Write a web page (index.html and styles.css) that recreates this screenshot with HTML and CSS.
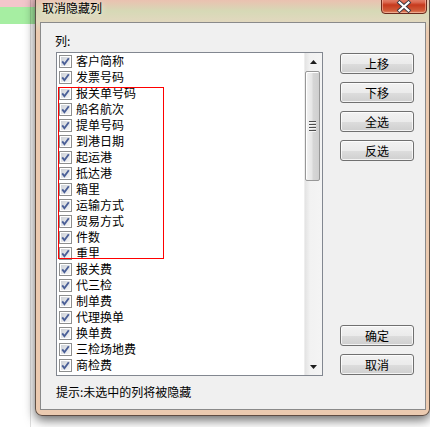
FILE: index.html
```html
<!DOCTYPE html>
<html lang="zh">
<head>
<meta charset="utf-8">
<title>取消隐藏列</title>
<link rel="stylesheet" href="styles.css">
</head>
<body>
<svg class="defs" width="0" height="0" aria-hidden="true">
  <defs>
    <linearGradient id="cbg" x1="0" y1="0" x2="1" y2="1">
      <stop offset="0" stop-color="#cdd1d7"/>
      <stop offset="1" stop-color="#f7f7f7"/>
    </linearGradient>
    <symbol id="chk" viewBox="0 0 13 13">
      <rect x="0.5" y="0.5" width="12" height="12" fill="#ffffff" stroke="#8e8f8f"/>
      <rect x="2" y="2" width="9" height="9" fill="url(#cbg)"/>
      <path d="M3.2 6.4 L5.4 9.2 L9.8 3.2" fill="none" stroke="#4a5f97" stroke-width="1.9" stroke-linejoin="miter"/>
    </symbol>
  </defs>
</svg>
<div class="desktop">
  <div class="appbar">
    <div class="pink"></div>
    <div class="green"></div>
  </div>
  <div class="vline"></div>

  <div class="window">
    <div class="titlebar">
      <span class="title">取消隐藏列</span>
      <div class="close">
        <svg width="46" height="20" viewBox="0 0 46 20">
          <path d="M18.5 8.5 L27.5 16.5 M27.5 8.5 L18.5 16.5" stroke="#3b3b44" stroke-width="4" stroke-linecap="square"/>
          <path d="M18.5 8.5 L27.5 16.5 M27.5 8.5 L18.5 16.5" stroke="#ffffff" stroke-width="2.2" stroke-linecap="square"/>
        </svg>
      </div>
    </div>
    <div class="client">
      <div class="label">列:</div>
      <div class="main">
        <div class="listbox">
          <div class="rows">
            <div class="row"><svg class="cb"><use href="#chk"/></svg><span>客户简称</span></div>
            <div class="row"><svg class="cb"><use href="#chk"/></svg><span>发票号码</span></div>
            <div class="row"><svg class="cb"><use href="#chk"/></svg><span>报关单号码</span></div>
            <div class="row"><svg class="cb"><use href="#chk"/></svg><span>船名航次</span></div>
            <div class="row"><svg class="cb"><use href="#chk"/></svg><span>提单号码</span></div>
            <div class="row"><svg class="cb"><use href="#chk"/></svg><span>到港日期</span></div>
            <div class="row"><svg class="cb"><use href="#chk"/></svg><span>起运港</span></div>
            <div class="row"><svg class="cb"><use href="#chk"/></svg><span>抵达港</span></div>
            <div class="row"><svg class="cb"><use href="#chk"/></svg><span>箱里</span></div>
            <div class="row"><svg class="cb"><use href="#chk"/></svg><span>运输方式</span></div>
            <div class="row"><svg class="cb"><use href="#chk"/></svg><span>贸易方式</span></div>
            <div class="row"><svg class="cb"><use href="#chk"/></svg><span>件数</span></div>
            <div class="row"><svg class="cb"><use href="#chk"/></svg><span>重里</span></div>
            <div class="row"><svg class="cb"><use href="#chk"/></svg><span>报关费</span></div>
            <div class="row"><svg class="cb"><use href="#chk"/></svg><span>代三检</span></div>
            <div class="row"><svg class="cb"><use href="#chk"/></svg><span>制单费</span></div>
            <div class="row"><svg class="cb"><use href="#chk"/></svg><span>代理换单</span></div>
            <div class="row"><svg class="cb"><use href="#chk"/></svg><span>换单费</span></div>
            <div class="row"><svg class="cb"><use href="#chk"/></svg><span>三检场地费</span></div>
            <div class="row"><svg class="cb"><use href="#chk"/></svg><span>商检费</span></div>
            <div class="highlight"></div>
          </div>
          <div class="scrollbar">
            <div class="arrow">
              <svg width="7" height="4" viewBox="0 0 7 4"><path d="M0 4 L3.5 0 L7 4 Z" fill="#1e1e1e"/></svg>
            </div>
            <div class="track">
              <div class="thumb">
                <div class="grip"><i></i><i></i><i></i><i></i></div>
              </div>
            </div>
            <div class="arrow">
              <svg width="7" height="4" viewBox="0 0 7 4"><path d="M0 0 L7 0 L3.5 4 Z" fill="#1e1e1e"/></svg>
            </div>
          </div>
        </div>
        <div class="buttons">
          <div class="group">
            <button class="btn">上移</button>
            <button class="btn">下移</button>
            <button class="btn">全选</button>
            <button class="btn">反选</button>
          </div>
          <div class="group">
            <button class="btn">确定</button>
            <button class="btn">取消</button>
          </div>
        </div>
      </div>
      <div class="hint">提示:未选中的列将被隐藏</div>
    </div>
  </div>
</div>
</body>
</html>
```

FILE: styles.css
```css
html, body {
  margin: 0;
  padding: 0;
  background: #ffffff;
}

body {
  font-family: "Noto Sans CJK SC", "Liberation Sans", sans-serif;
  font-size: 12px;
  color: #000000;
}

.defs {
  position: absolute;
  width: 0;
  height: 0;
}

.desktop {
  position: relative;
  width: 430px;
  height: 427px;
  overflow: hidden;
  background: #ffffff;
}

.appbar .pink {
  height: 7px;
  background: #f3c6cb;
}

.appbar .green {
  height: 17px;
  background: #a6eea2;
}

.vline {
  position: absolute;
  left: 30px;
  top: 0;
  width: 1px;
  height: 427px;
  background: rgba(0, 0, 0, 0.13);
}

.window {
  position: absolute;
  left: 35px;
  top: -9px;
  width: 395px;
  height: 425px;
  box-sizing: border-box;
  border: 1px solid rgba(50, 40, 35, 0.75);
  border-radius: 7px;
  background: linear-gradient(to bottom,
    #e6b5a3 0px,
    #e9c3b1 9px,
    #d6d9b6 19px,
    #e2d8bf 30px,
    #ebcab0 40px,
    #ebcab0 100%);
  box-shadow: 0 4px 11px rgba(0, 0, 0, 0.6);
  display: flex;
  flex-direction: column;
}

.titlebar {
  position: relative;
  height: 30px;
  flex: none;
}

.title {
  display: block;
  padding: 8px 0 0 6px;
  line-height: 16px;
  font-size: 12px;
  text-shadow: 0 0 6px rgba(255, 255, 255, 0.9);
}

.close {
  position: absolute;
  right: 2px;
  top: 2px;
  width: 46px;
  height: 20px;
  box-sizing: border-box;
  border: 1px solid #6b2a1c;
  border-radius: 0 0 4px 4px;
  background: linear-gradient(to bottom, #e9a795 0%, #dc6a52 40%, #c6391d 55%, #d05a38 85%, #e08a66 100%);
  box-shadow: inset 0 0 0 1px rgba(255, 210, 190, 0.5);
  overflow: hidden;
}

.close svg {
  display: block;
  margin: -1px 0 0 -1px;
}

.client {
  flex: 1;
  margin: 0 3px 5px 4px;
  box-sizing: border-box;
  border: 1px solid #8a8a8a;
  background: #f0f0f0;
  padding: 10px 0 0 15px;
  display: flex;
  flex-direction: column;
}

.label {
  line-height: 16px;
  margin: 0 0 3px -1px;
}

.main {
  display: flex;
  gap: 17px;
}

.listbox {
  width: 267px;
  height: 324px;
  box-sizing: border-box;
  border: 1px solid #828790;
  background: #ffffff;
  display: flex;
}

.rows {
  position: relative;
  flex: 1;
  overflow: hidden;
}

.row {
  height: 16px;
  display: flex;
  align-items: flex-start;
  padding-left: 2px;
  line-height: 16px;
  white-space: nowrap;
}

.cb {
  width: 13px;
  height: 13px;
  margin: 2px 4px 0 0;
  flex: none;
}

.highlight {
  position: absolute;
  left: 1px;
  top: 34px;
  width: 106px;
  height: 172px;
  box-sizing: border-box;
  border: 1px solid #ff0000;
}

.scrollbar {
  width: 17px;
  display: flex;
  flex-direction: column;
  background: linear-gradient(to right, #e3e3e3 0%, #f2f2f2 30%, #f4f4f4 100%);
  border-left: 1px solid #eeeeee;
}

.arrow {
  height: 17px;
  display: flex;
  align-items: center;
  justify-content: center;
  flex: none;
}

.track {
  flex: 1;
  padding-top: 1px;
}

.thumb {
  width: 15px;
  height: 110px;
  margin-left: 0;
  box-sizing: border-box;
  border: 1px solid #979797;
  border-radius: 2px;
  background: linear-gradient(to right, #f3f3f3 0%, #e6e6e6 45%, #d6d6d6 55%, #cfcfcf 100%);
  box-shadow: inset 1px 1px 0 #ffffff;
  display: flex;
  align-items: center;
  justify-content: center;
}

.grip {
  display: flex;
  flex-direction: column;
  gap: 1px;
}

.grip i {
  display: block;
  width: 7px;
  height: 1px;
  background: #4e4e4e;
  border-bottom: 1px solid #f5f5f5;
}

.buttons {
  height: 324px;
  box-sizing: border-box;
  padding: 1px 0;
  display: flex;
  flex-direction: column;
  justify-content: space-between;
}

.group {
  display: flex;
  flex-direction: column;
  gap: 8px;
}

.btn {
  width: 74px;
  height: 21px;
  box-sizing: border-box;
  padding: 0;
  margin: 0;
  border: 1px solid #707070;
  border-radius: 3px;
  background: linear-gradient(to bottom, #f2f2f2 0%, #ebebeb 50%, #dddddd 51%, #cfcfcf 100%);
  box-shadow: inset 0 0 0 1px rgba(255, 255, 255, 0.75);
  font-family: "Noto Sans CJK SC", "Liberation Sans", sans-serif;
  font-size: 12px;
  line-height: 17px;
  color: #000000;
  text-align: center;
}

.hint {
  margin-top: 8px;
  line-height: 16px;
}
```
